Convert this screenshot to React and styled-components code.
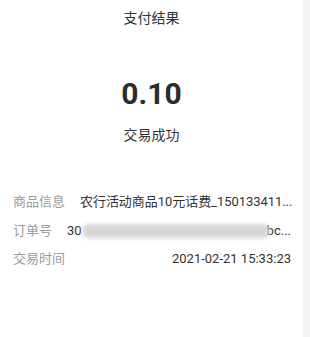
import React from 'react';
import styled, { createGlobalStyle } from 'styled-components';

const GlobalStyle = createGlobalStyle`
  body {
    margin: 0;
    background: #fff;
    font-family: Roboto, "Noto Sans CJK SC", sans-serif;
  }
`

const rows = [
  { label: '商品信息', value: '农行活动商品10元话费_150133411...', tight: true },
  { label: '订单号', value: '30', masked: true, tail: 'bc...' },
  { label: '交易时间', value: '2021-02-21 15:33:23' },
]

const App = () => {
  return (
    <Page>
      <GlobalStyle />
      <Main>
        <Title>支付结果</Title>
        <Amount>0.10</Amount>
        <Status>交易成功</Status>
        <InfoList>
          {rows.map(row => (
            <Row key={row.label}>
              <Label>{row.label}</Label>
              {row.masked ? (
                <Masked>
                  <span>{row.value}</span>
                  <Blur />
                  <span>{row.tail}</span>
                </Masked>
              ) : (
                <Value $tight={row.tight}>{row.value}</Value>
              )}
            </Row>
          ))}
        </InfoList>
      </Main>
      <Strip />
    </Page>
  )
}

const Page = styled.div`
  display: flex;
  width: 310px;
  height: 337px;
  overflow: hidden;
`
const Main = styled.div`
  width: 303px;
  padding-top: 8px;
  display: flex;
  flex-direction: column;
  align-items: center;
  background: #fff;
`
const Strip = styled.div`
  flex: 1;
  background: #f2f2f2;
`
const Title = styled.div`
  font-size: 14px;
  line-height: 20px;
  color: #333;
`
const Amount = styled.div`
  margin-top: 48px;
  font-size: 30px;
  line-height: 36px;
  font-weight: 700;
  color: #2c2c2c;
`
const Status = styled.div`
  margin-top: 13px;
  font-size: 14px;
  line-height: 20px;
  color: #333;
`
const InfoList = styled.div`
  align-self: stretch;
  margin-top: 47px;
  padding: 0 12px 0 13px;
  display: flex;
  flex-direction: column;
  gap: 8.5px;
`
const Row = styled.div`
  display: flex;
  align-items: center;
  line-height: 20px;
  font-size: 13px;
`
const Label = styled.div`
  flex: none;
  color: #9a9a9a;
  margin-right: 15px;
`
const Value = styled.div`
  flex: 1;
  min-width: 0;
  color: #333;
  text-align: right;
  white-space: nowrap;
  letter-spacing: ${props => props.$tight ? '-0.05px' : '0'};
`
const Masked = styled.div`
  flex: 1;
  min-width: 0;
  display: flex;
  align-items: center;
  color: #333;
  white-space: nowrap;
`
const Blur = styled.div`
  flex: 1;
  height: 14px;
  margin: 0 -3px 0 0;
  background: #d6d6d6;
  border-radius: 7px;
  filter: blur(2px);
`

export default App;
